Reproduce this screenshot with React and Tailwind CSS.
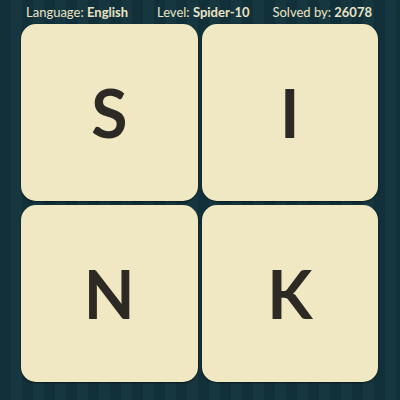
export default function App() {
  const letters = ["S", "I", "N", "K"];
  return (
    <div
      className="w-[400px] h-[400px] overflow-hidden bg-[repeating-linear-gradient(90deg,#12303a_0px,#12303a_11px,#16373f_11px,#16373f_22px)] flex flex-col"
      style={{ fontFamily: "Lato, 'Open Sans', sans-serif" }}
    >
      <div className="h-[24px] flex items-center justify-between pl-[26px] pr-[28px] text-[13px] text-[#e9e4c6] leading-none">
        <span>
          Language: <b className="font-bold">English</b>
        </span>
        <span className="ml-[6px]">
          Level: <b className="font-bold">Spider-10</b>
        </span>
        <span>
          Solved by: <b className="font-bold">26078</b>
        </span>
      </div>
      <div className="ml-[21px] w-[357px] grid grid-cols-2 gap-[4px]">
        {letters.map((l) => (
          <div
            key={l}
            className="h-[177px] rounded-[15px] bg-[#f0e8c2] shadow-[0_1px_2px_rgba(0,0,0,0.5)] flex items-center justify-center text-[66px] font-bold text-[#2d2a25] leading-none"
          >
            {l}
          </div>
        ))}
      </div>
    </div>
  );
}
